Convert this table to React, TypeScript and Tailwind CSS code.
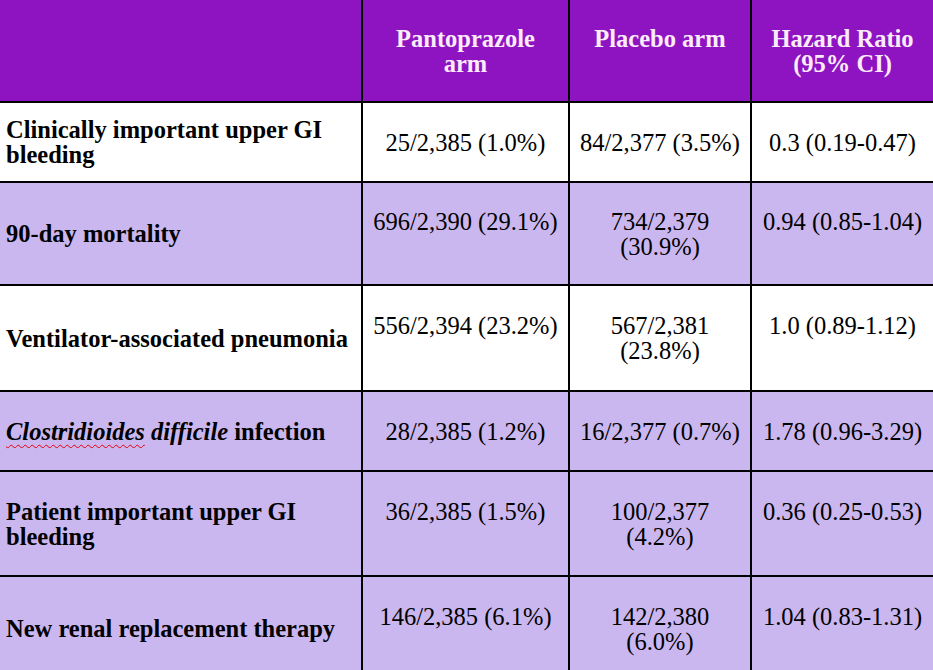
const rows = [
  {
    label: <>Clinically important upper GI bleeding</>,
    cells: [["25/2,385 (1.0%)"], ["84/2,377 (3.5%)"], ["0.3 (0.19-0.47)"]],
    tint: false,
    h: "h-[78px]",
    two: false,
  },
  {
    label: <>90-day mortality</>,
    cells: [["696/2,390 (29.1%)"], ["734/2,379", "(30.9%)"], ["0.94 (0.85-1.04)"]],
    tint: true,
    h: "h-[101px]",
    two: true,
  },
  {
    label: <>Ventilator-associated pneumonia</>,
    cells: [["556/2,394 (23.2%)"], ["567/2,381", "(23.8%)"], ["1.0 (0.89-1.12)"]],
    tint: false,
    h: "h-[104px]",
    two: true,
  },
  {
    label: (
      <>
        <i className="underline decoration-wavy decoration-red-600 decoration-1 underline-offset-4">
          Clostridioides
        </i>{" "}
        <i>difficile</i> infection
      </>
    ),
    cells: [["28/2,385 (1.2%)"], ["16/2,377 (0.7%)"], ["1.78 (0.96-3.29)"]],
    tint: true,
    h: "h-[78px]",
    two: false,
  },
  {
    label: <>Patient important upper GI bleeding</>,
    cells: [["36/2,385 (1.5%)"], ["100/2,377", "(4.2%)"], ["0.36 (0.25-0.53)"]],
    tint: true,
    h: "h-[103px]",
    two: true,
  },
  {
    label: <>New renal replacement therapy</>,
    cells: [["146/2,385 (6.1%)"], ["142/2,380", "(6.0%)"], ["1.04 (0.83-1.31)"]],
    tint: true,
    h: "h-[103px]",
    two: true,
  },
];

const colW = [207, 182, 181];

const headers = [
  ["Pantoprazole", "arm"],
  ["Placebo arm"],
  ["Hazard Ratio", "(95% CI)"],
];

export default function App() {
  return (
    <div
      className="w-[933px] h-[670px] overflow-hidden bg-white text-black text-[24.5px] leading-[25px]"
      style={{ fontFamily: '"Liberation Serif", "Times New Roman", serif' }}
    >
      {/* header */}
      <div className="flex h-[103px] border-b-2 border-black bg-[#8f14c1] font-bold text-[#fbecfb]">
        <div className="w-[363px] border-r-2 border-black" />
        {headers.map((lines, i) => (
          <div
            key={i}
            className={`flex items-center justify-center shrink-0 ${i < 2 ? "border-r-2 border-black" : ""}`}
            style={{ width: colW[i] }}
          >
            <div className="h-[50px] px-2 text-center">
              {lines.map((l) => (
                <div key={l}>{l}</div>
              ))}
            </div>
          </div>
        ))}
      </div>

      {rows.map((r, idx) => (
        <div
          key={idx}
          className={`flex border-b-2 border-black ${r.tint ? "bg-[#cbb7f0]" : "bg-white"}`}
        >
          <div
            className={`w-[363px] shrink-0 border-r-2 border-black flex items-center pl-[6px] pr-2 font-bold ${r.h}`}
          >
            <div>{r.label}</div>
          </div>
          {r.cells.map((c, i) => (
            <div
              key={i}
              className={`shrink-0 flex items-center justify-center ${i < 2 ? "border-r-2 border-black" : ""}`}
              style={{ width: colW[i] }}
            >
              <div className={`text-center whitespace-nowrap ${r.two ? "h-[50px]" : ""}`}>
                {c.map((line, j) => (
                  <div key={j}>{line}</div>
                ))}
              </div>
            </div>
          ))}
        </div>
      ))}
    </div>
  );
}
